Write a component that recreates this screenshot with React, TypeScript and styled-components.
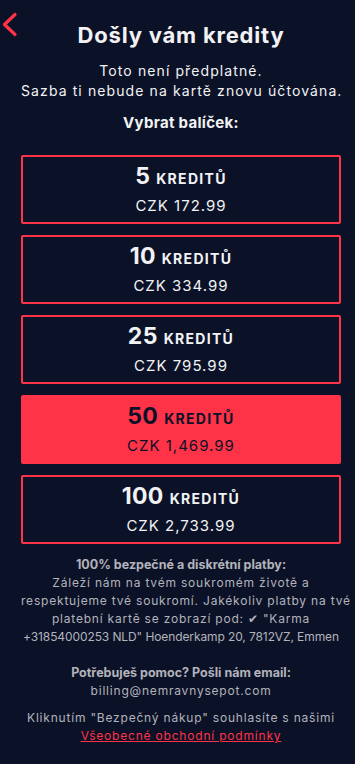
import styled, { createGlobalStyle } from "styled-components";

const GlobalStyle = createGlobalStyle`
  body {
    margin: 0;
    background: #0b1228;
    font-family: "Inter", "Open Sans", sans-serif;
    color: #f2f2f4;
  }
`;

const SPage = styled.div`
  display: flex;
  flex-direction: column;
  padding: 0 14px 0 21px;
  min-height: 764px;
  box-sizing: border-box;
`;

const SHeader = styled.div`
  position: relative;
  display: flex;
  justify-content: center;
  padding-top: 20px;
`;

const SBack = styled.button`
  position: absolute;
  left: -19px;
  top: 12px;
  background: none;
  border: none;
  padding: 0;
  cursor: pointer;
`;

const STitle = styled.h1`
  margin: 0;
  font-size: 22px;
  font-weight: 700;
  letter-spacing: 0.8px;
  line-height: 30px;
  color: #f2f2f4;
`;

const SSubtitle = styled.p`
  margin: 11px 0 0;
  font-size: 14px;
  letter-spacing: 1.1px;
  line-height: 20px;
  text-align: center;
  white-space: nowrap;
  color: #f2f2f4;
`;

const SPick = styled.h3`
  margin: 12px 0 0;
  font-size: 15px;
  font-weight: 700;
  letter-spacing: 0.3px;
  line-height: 20px;
  text-align: center;
`;

const SPackList = styled.ul`
  list-style: none;
  margin: 22px 0 0;
  padding: 0;
  display: flex;
  flex-direction: column;
  gap: 11px;
`;

const SPack = styled.li<{ $active?: boolean }>`
  height: 69px;
  box-sizing: border-box;
  border: 2px solid #ff3347;
  border-radius: 2px;
  background: ${(p) => (p.$active ? "#ff3347" : "transparent")};
  color: ${(p) => (p.$active ? "#0b1228" : "#f2f2f4")};
  display: flex;
  flex-direction: column;
  align-items: center;
  justify-content: center;
  gap: 4px;
  cursor: pointer;
`;

const SAmount = styled.div`
  display: flex;
  align-items: baseline;
  gap: 6px;
  line-height: 26px;
`;

const SNumber = styled.span`
  font-size: 23px;
  font-weight: 700;
  letter-spacing: 0.3px;
`;

const SUnit = styled.span`
  font-size: 14px;
  font-weight: 700;
  letter-spacing: 1.3px;
`;

const SPrice = styled.span`
  font-size: 15px;
  letter-spacing: 1px;
  line-height: 20px;
`;

const SInfo = styled.div`
  margin-top: 12px;
  font-size: 12px;
  letter-spacing: 0.8px;
  line-height: 18px;
  text-align: center;
  color: #b3b3bb;
  white-space: nowrap;
`;

const SInfoHead = styled.div`
  font-size: 12.5px;
  font-weight: 700;
  letter-spacing: 0;
`;

const SAddress = styled.span`
  letter-spacing: -0.1px;
`;

const SBlock = styled.div<{ $space: number }>`
  margin-top: ${(p) => p.$space}px;
`;

const SLink = styled.a`
  color: #ff3347;
  text-decoration: underline;
`;

const packs = [
  { n: 5, price: "CZK 172.99" },
  { n: 10, price: "CZK 334.99" },
  { n: 25, price: "CZK 795.99" },
  { n: 50, price: "CZK 1,469.99", active: true },
  { n: 100, price: "CZK 2,733.99" },
];

const App = () => {
  return (
    <SPage>
      <GlobalStyle />
      <SHeader>
        <SBack>
          <svg width="18" height="26" viewBox="0 0 18 26">
            <path
              d="M13 2.5 L2.5 12.5 L13 22.5"
              fill="none"
              stroke="#ff3347"
              strokeWidth="3.2"
              strokeLinecap="round"
              strokeLinejoin="round"
            />
          </svg>
        </SBack>
        <STitle>Došly vám kredity</STitle>
      </SHeader>
      <SSubtitle>
        Toto není předplatné.
        <br />
        Sazba ti nebude na kartě znovu účtována.
      </SSubtitle>
      <SPick>Vybrat balíček:</SPick>
      <SPackList>
        {packs.map((p) => (
          <SPack key={p.n} $active={p.active}>
            <SAmount>
              <SNumber>{p.n}</SNumber>
              <SUnit>KREDITŮ</SUnit>
            </SAmount>
            <SPrice>{p.price}</SPrice>
          </SPack>
        ))}
      </SPackList>
      <SInfo>
        <SInfoHead>100% bezpečné a diskrétní platby:</SInfoHead>
        Záleží nám na tvém soukromém životě a
        <br />
        respektujeme tvé soukromí. Jakékoliv platby na tvé
        <br />
        platební kartě se zobrazí pod: ✔ "Karma
        <br />
        <SAddress>+31854000253 NLD" Hoenderkamp 20, 7812VZ, Emmen</SAddress>
        <SBlock $space={18}>
          <SInfoHead>Potřebuješ pomoc? Pošli nám email:</SInfoHead>
          billing@nemravnysepot.com
        </SBlock>
        <SBlock $space={9}>
          Kliknutím "Bezpečný nákup" souhlasíte s našimi
          <br />
          <SLink href="#">Všeobecné obchodní podmínky</SLink>
        </SBlock>
      </SInfo>
    </SPage>
  );
};

export default App;
